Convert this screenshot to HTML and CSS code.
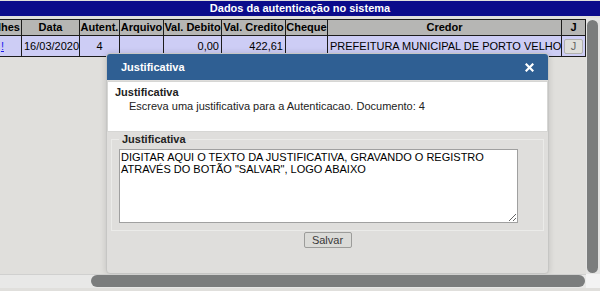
FILE: index.html
```html
<!DOCTYPE html>
<html lang="pt-BR">
<head>
<meta charset="utf-8">
<title>Dados da autenticação no sistema</title>
<link rel="stylesheet" href="styles.css">
</head>
<body>
<div class="topbar">Dados da autenticação no sistema</div>
<div class="viewport">
  <div class="content">
    <table class="grid">
      <colgroup>
        <col class="w-det"><col class="w-data"><col class="w-aut"><col class="w-arq"><col class="w-deb"><col class="w-cred"><col class="w-chq"><col class="w-credor"><col class="w-j">
      </colgroup>
      <thead>
        <tr><th>Detalhes</th><th>Data</th><th>Autent.</th><th>Arquivo</th><th>Val. Debito</th><th>Val. Credito</th><th>Cheque</th><th>Credor</th><th>J</th></tr>
      </thead>
      <tbody>
        <tr>
          <td class="c-link"><a href="#">!</a></td>
          <td class="c-center">16/03/2020</td>
          <td class="c-center">4</td>
          <td></td>
          <td class="c-num">0,00</td>
          <td class="c-num">422,61</td>
          <td></td>
          <td class="c-left">PREFEITURA MUNICIPAL DE PORTO VELHO</td>
          <td class="c-center"><span class="jbtn">J</span></td>
        </tr>
      </tbody>
    </table>

    <div class="dialog">
      <div class="dialog-title">
        <span>Justificativa</span>
        <svg class="close" width="9" height="9" viewBox="0 0 9 9"><path d="M1.5 1.5 L7.5 7.5 M7.5 1.5 L1.5 7.5" stroke="#fff" stroke-width="2.2" stroke-linecap="square"/></svg>
      </div>
      <div class="info">
        <div class="info-title">Justificativa</div>
        <p class="info-text">Escreva uma justificativa para a Autenticacao. Documento: 4</p>
      </div>
      <fieldset class="fs">
        <legend>Justificativa</legend>
        <textarea class="txt">DIGITAR AQUI O TEXTO DA JUSTIFICATIVA, GRAVANDO O REGISTRO ATRAVÉS DO BOTÃO "SALVAR", LOGO ABAIXO</textarea>
      </fieldset>
      <div class="actions"><button class="btn" type="button">Salvar</button></div>
    </div>
  </div>
  <div class="vscroll"><div class="vthumb"></div></div>
  <div class="hscroll"><div class="hthumb"></div></div>
  <div class="corner"></div>
</div>
</body>
</html>
```
FILE: styles.css
```css
html, body {
  margin: 0;
  padding: 0;
}
body {
  background: #e0dfdc;
  font: 11px "Liberation Sans", Arial, sans-serif;
  color: #000;
  overflow: hidden;
}
.topbar {
  margin-top: 1px;
  height: 15px;
  line-height: 15px;
  background: #0b0b8b;
  color: #fff;
  font-weight: bold;
  text-align: center;
}
.viewport {
  margin-top: 2px;
  display: grid;
  grid-template-columns: 586px 14px;
  grid-template-rows: 256px 14px;
}
.content {
  position: relative;
  overflow: hidden;
}
.grid {
  margin: 1px 0 0 -28px;
  border-collapse: collapse;
  table-layout: fixed;
  width: 613px;
}
.w-det { width: 49px; }
.w-data { width: 58px; }
.w-aut { width: 40px; }
.w-arq { width: 44px; }
.w-deb { width: 58px; }
.w-cred { width: 64px; }
.w-chq { width: 42px; }
.w-credor { width: 234px; }
.w-j { width: 24px; }
.grid th, .grid td {
  border: 1px solid #1c1c1c;
  padding: 0 2px;
  white-space: nowrap;
  overflow: hidden;
}
.grid th {
  background: #b6b6b4;
  height: 15px;
  line-height: 15px;
  font-weight: bold;
  text-align: center;
  padding: 0;
}
.grid td {
  background: #cdcdf5;
  height: 20px;
}
.c-link { text-align: right; padding-right: 17px !important; }
.c-link a { color: #1a1aee; }
.c-center { text-align: center; }
.c-num { text-align: right; }
.c-left { text-align: left; }
.jbtn {
  display: inline-block;
  width: 17px;
  height: 13px;
  line-height: 13px;
  border: 1px solid #b2b2ae;
  background: #dfdfdb;
  color: #666;
  border-radius: 2px;
  vertical-align: middle;
}
.dialog {
  position: absolute;
  left: 106px;
  top: 35px;
  width: 441px;
  height: 219px;
  border: 1px solid #c6c6c4;
  border-radius: 4px;
  background: #dfdedc;
  box-shadow: 0 0 6px rgba(0, 0, 0, 0.14);
  display: flex;
  flex-direction: column;
}
.dialog-title {
  height: 26px;
  background: #2f5f93;
  color: #fff;
  font-weight: bold;
  display: flex;
  align-items: center;
  justify-content: space-between;
  padding: 0 14px;
  border-radius: 3px 3px 0 0;
}
.close { display: block; }
.info {
  margin-top: 1px;
  height: 43px;
  padding: 3px 7px;
  background: #fff;
  border: 1px solid #d6d6d4;
  line-height: 14px;
  color: #222;
}
.info-title { font-weight: bold; }
.info-text { margin: 0 0 0 14px; }
.fs {
  margin: 1px 4px 0;
  border: 1px solid #ebebe9;
  padding: 3px 7px 7px;
}
.fs legend {
  font-weight: bold;
  padding: 0 3px;
  line-height: 13px;
  color: #222;
}
.txt {
  display: block;
  box-sizing: border-box;
  width: 399px;
  height: 74px;
  margin: 0;
  border: 1px solid #a0a0a0;
  padding: 1px 1px;
  font: 11px/12px "Liberation Sans", Arial, sans-serif;
  color: #000;
  background: #fff;
}
.actions {
  display: flex;
  justify-content: center;
  padding-top: 1px;
}
.btn {
  width: 48px;
  height: 16px;
  padding: 0;
  border: 1px solid #9c9c9a;
  border-radius: 2px;
  background: #dbdbd8;
  color: #3a3a3a;
  font: 11px "Liberation Sans", Arial, sans-serif;
}
.vscroll {
  background: #e4e4e3;
  padding: 2px 2px 1px 1px;
}
.vthumb {
  height: 253px;
  background: #7b7d7d;
  border-radius: 6px;
}
.hscroll {
  background: #e8e8e7;
  border-top: 1px solid #d0d0cf;
  padding: 0 1px 0 91px;
}
.hthumb {
  height: 12px;
  background: #7b7d7d;
  border-radius: 6px;
}
.corner {
  background: #f3f3f3;
}
```
